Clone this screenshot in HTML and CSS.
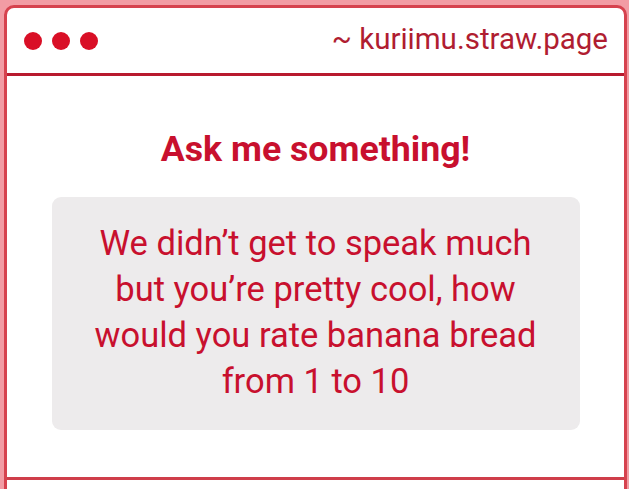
FILE: index.html
```html
<!DOCTYPE html>
<html>
<head>
<meta charset="utf-8">
<link rel="stylesheet" href="styles.css">
</head>
<body>
<div class="window">
  <div class="titlebar">
    <div class="dots"><span class="dot"></span><span class="dot"></span><span class="dot"></span></div>
    <div class="url">~ kuriimu.straw.page</div>
  </div>
  <div class="content">
    <h1 class="heading">Ask me something!</h1>
    <div class="card">
      <p class="question">We didn’t get to speak much but you’re pretty cool, how would you rate banana bread from 1 to 10</p>
    </div>
  </div>
  <div class="footer"></div>
</div>
</body>
</html>
```
FILE: styles.css
```css
html, body {
  margin: 0;
  padding: 0;
}
body {
  background: #f29ca4;
  font-family: Roboto, "Liberation Sans", sans-serif;
  height: 489px;
  overflow: hidden;
  padding-top: 5px;
  padding-left: 4px;
}
.window {
  width: 617px;
  background: #fff;
  border: 3px solid #d6424e;
  border-radius: 10px 10px 0 0;
}
.titlebar {
  height: 65px;
  display: flex;
  align-items: center;
  justify-content: space-between;
  padding: 0 16px 0 17px;
  border-bottom: 3px solid #b81a2e;
}
.dots {
  display: flex;
  gap: 10px;
  margin-top: 1px;
}
.dot {
  width: 18px;
  height: 18px;
  border-radius: 50%;
  background: #d90f26;
}
.url {
  font-size: 29.5px;
  color: #b01d31;
  margin-top: -3px;
}
.content {
  height: 404px;
  box-sizing: border-box;
  border-bottom: 3px solid #cf3e4a;
  display: flex;
  flex-direction: column;
  align-items: center;
}
.heading {
  margin: 53px 0 0;
  font-size: 35.7px;
  font-weight: 700;
  color: #c8102e;
  line-height: 40px;
}
.card {
  margin-top: 28px;
  width: 528px;
  height: 233px;
  background: #edebec;
  border-radius: 9px;
  display: flex;
  align-items: center;
  justify-content: center;
  box-sizing: border-box;
  padding: 0 34px 3px;
}
.question {
  margin: 0;
  text-align: center;
  font-size: 34.5px;
  line-height: 46px;
  color: #c8102e;
}
.footer {
  height: 20px;
}
```
